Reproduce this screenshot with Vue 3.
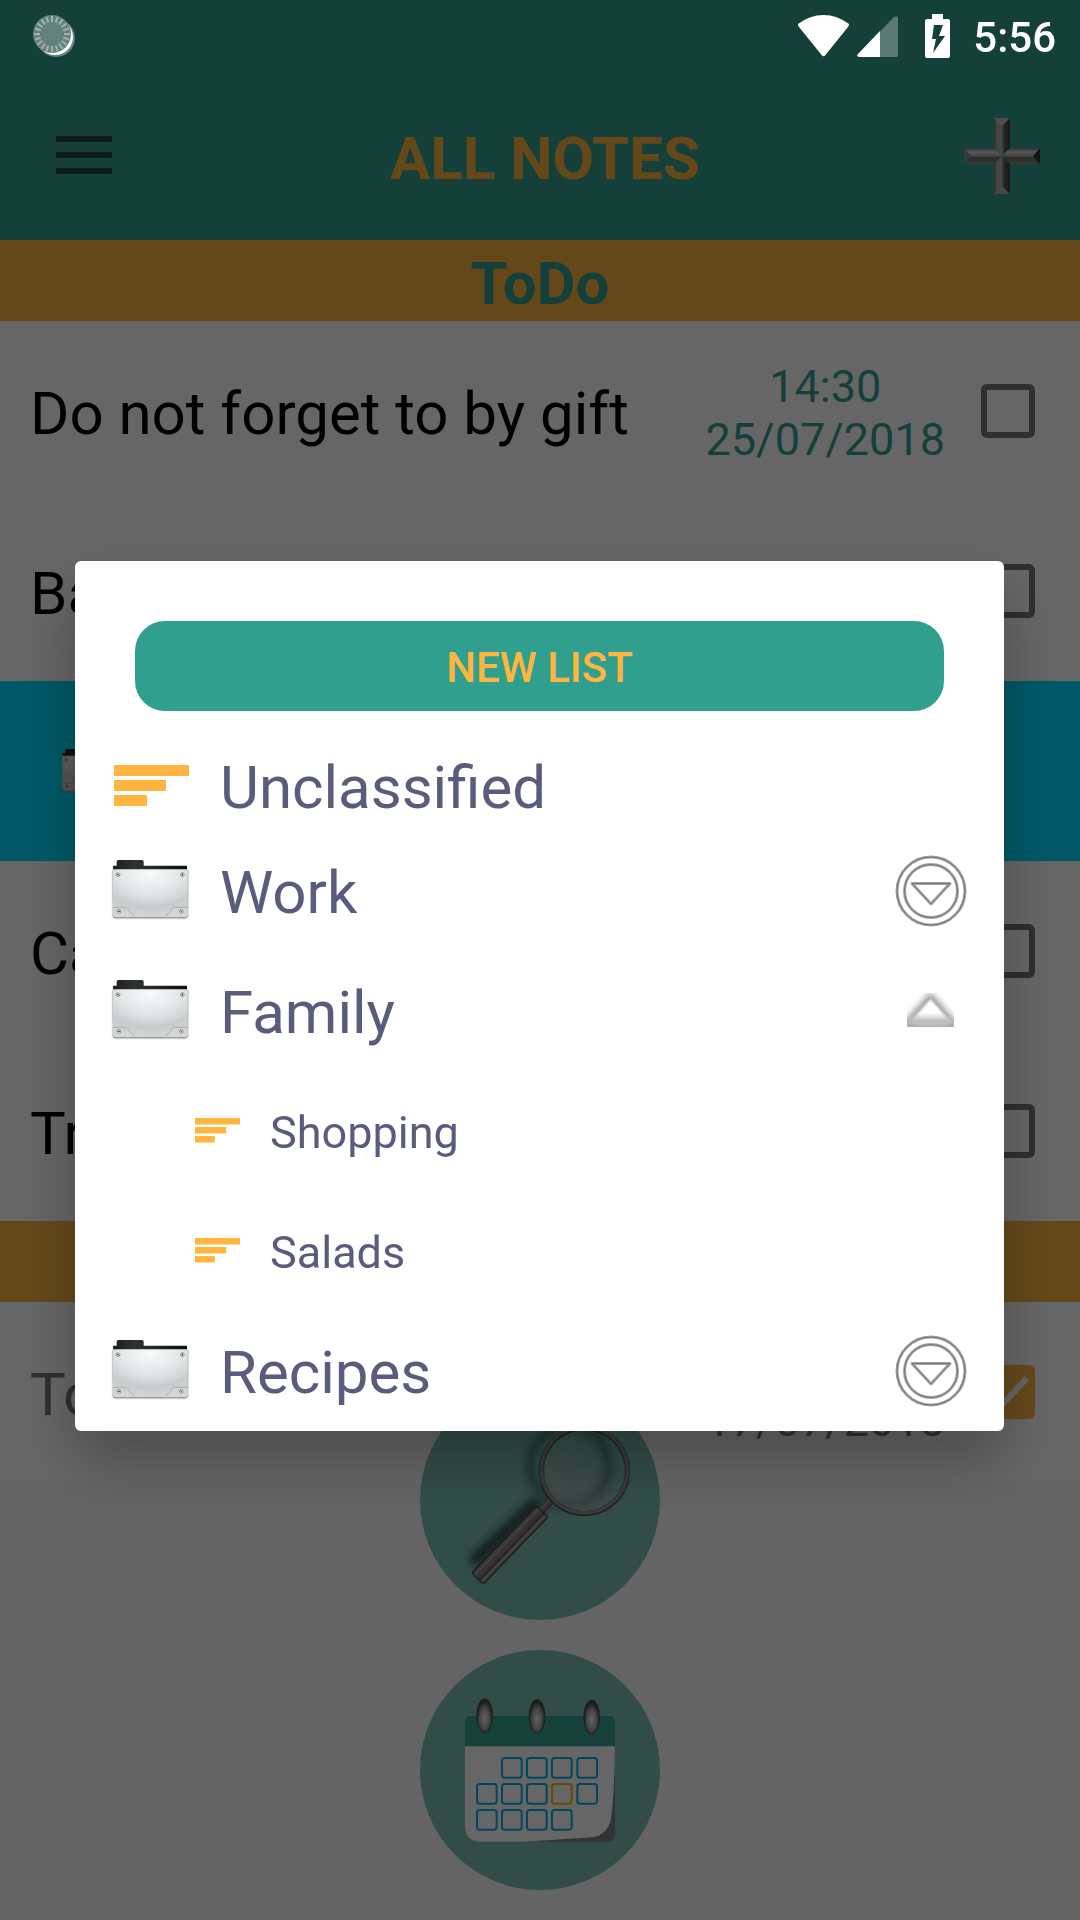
<script setup>
import { ref } from 'vue'

const todo = ref([
  { id: 1, kind: 'note', title: 'Do not forget to by gift', time: '14:30', date: '25/07/2018', done: false },
  { id: 2, kind: 'note', title: 'Ba', done: false },
  { id: 3, kind: 'folder' },
  { id: 4, kind: 'note', title: 'Ca', done: false },
  { id: 5, kind: 'note', title: 'Tr', done: false },
])

const completed = ref([
  { id: 6, title: 'To', time: '', date: '17/07/2018', done: true },
])

const lists = [
  { name: 'Unclassified', type: 'list' },
  { name: 'Work', type: 'folder', open: false },
  { name: 'Family', type: 'folder', open: true },
  { name: 'Shopping', type: 'child' },
  { name: 'Salads', type: 'child' },
  { name: 'Recipes', type: 'folder', open: false },
]

const ticks = Array.from({ length: 20 }, (_, i) => i * 18)
const days = [
  [363, 381], [438, 381], [513, 381], [589, 381],
  [288, 459], [363, 459], [438, 459], [513, 459, true], [589, 459],
  [288, 537], [363, 537], [438, 537], [513, 537],
]
const rings = [[314, 257], [471, 259], [635, 261]]
</script>

<template>
  <div class="app">
    <svg class="defs" width="0" height="0" aria-hidden="true">
      <defs>
        <radialGradient id="face" cx=".5" cy=".1" r=".9">
          <stop offset="0" stop-color="#f8fbfc" />
          <stop offset=".45" stop-color="#e3e6e7" />
          <stop offset=".75" stop-color="#c9cccd" />
          <stop offset="1" stop-color="#d4d6d7" />
        </radialGradient>
        <linearGradient id="tab" x1="0" x2="1">
          <stop offset="0" stop-color="#1b1d1d" />
          <stop offset=".3" stop-color="#303333" />
          <stop offset="1" stop-color="#0d0e0e" />
        </linearGradient>
        <symbol id="folder" viewBox="63 60 234 186">
          <path d="M69 90V80q0-3 4-3h7V65q0-5 5-5h71q5 0 5 5v12h128q2 0 2 3v10z" fill="url(#tab)" />
          <path d="M70 232q2 6 8 6h205q6 0 9-6z" fill="#b9b9b9" opacity=".6" />
          <path d="M66 88h230l-2 139q0 6-6 6H75q-6 0-6-6z" fill="url(#face)" />
          <path d="M67 90v138M294 90v138" stroke="#b0b3b4" stroke-width="2" fill="none" />
          <path d="M69 227q0 6 6 6h213q6 0 6-6" stroke="#707273" stroke-width="2" fill="none" />
          <path d="M70 202h40l24 28M293 202h-43l-24 28" stroke="#9b9d9e" stroke-width="2" fill="none" />
          <g fill="#dcdcdc" stroke="#85878a" stroke-width="2">
            <circle cx="84" cy="104" r="6" /><circle cx="277" cy="104" r="6" />
            <circle cx="87" cy="214" r="6" /><circle cx="274" cy="214" r="6" />
          </g>
          <path d="M80 102l8 4M277 100v8M83 214h8M271 211l6 6" stroke="#444" stroke-width="3" />
        </symbol>
        <symbol id="lines" viewBox="0 0 75 43">
          <path d="M0 0h75v11H0zM0 15h52v11H0zM0 30h33v11H0z" fill="#ffb53f" />
        </symbol>
      </defs>
    </svg>

    <div class="status">
      <svg class="sync" width="43" height="44" viewBox="0 0 43 44" aria-hidden="true">
        <circle cx="23" cy="24" r="19" fill="#fff" opacity=".35" />
        <circle cx="22" cy="23" r="18" fill="#fff" />
        <circle cx="19" cy="20" r="19" fill="#64827c" />
        <path v-for="a in ticks" :key="a" d="M19 2v6" stroke="#9fb2ae" stroke-width="2" :transform="`rotate(${a} 19 20)`" />
      </svg>
      <svg class="wifi" width="51" height="42" viewBox="0 0 51 42" aria-hidden="true">
        <path d="M0 9Q12 0 25.500 0T51 9q0 2-1 3L27 40.500q-1.500 1.500-3 0L1 12q-1-1-1-3z" fill="#fff" />
      </svg>
      <svg class="signal" width="41" height="41" viewBox="0 0 41 41" aria-hidden="true">
        <path d="M1 38L37 1q4-2 4 1v37q0 2-2 2H2q-3-1-1-3z" fill="#fff" opacity=".3" />
        <path d="M1 38L23 15v26H2q-3-1-1-3z" fill="#fff" />
      </svg>
      <svg class="battery" width="25" height="44" viewBox="0 0 25 44" aria-hidden="true">
        <path d="M7 0h11v5h5q2 0 2 2v35q0 2-2 2H2q-2 0-2-2V7q0-2 2-2h5z" fill="#fff" />
        <path d="M9 11h9l-4 11h6L8 39l3-14H7z" fill="#14403a" />
      </svg>
      <span class="clock">5:56</span>
    </div>

    <header class="bar">
      <button class="menu" aria-label="Menu">
        <svg width="56" height="40" viewBox="0 0 56 40"><path d="M0 0h56v6H0zM0 16h56v6H0zM0 32h56v6H0z" fill="#194e44" /></svg>
      </button>
      <h1 class="title">ALL NOTES</h1>
      <button class="add" aria-label="Add">
        <svg width="76" height="76" viewBox="0 0 76 76">
          <defs>
            <linearGradient id="pv" x1="0" x2="1">
              <stop offset="0" stop-color="#777" /><stop offset=".2" stop-color="#aaa" />
              <stop offset=".45" stop-color="#b4b4b4" /><stop offset=".65" stop-color="#5c5c5c" /><stop offset="1" stop-color="#383838" />
            </linearGradient>
            <linearGradient id="ph" x1="0" x2="0" y1="0" y2="1">
              <stop offset="0" stop-color="#777" /><stop offset=".25" stop-color="#d8d8d8" />
              <stop offset=".48" stop-color="#b0b0b0" /><stop offset=".62" stop-color="#666" /><stop offset="1" stop-color="#8c8c8c" />
            </linearGradient>
          </defs>
          <path d="M30 0h16v30l-8 8-8-8zM30 76h16V46l-8-8-8 8z" fill="url(#pv)" />
          <path d="M0 30h30l8 8-8 8H0zM76 30H46l-8 8 8 8h30z" fill="url(#ph)" />
          <path d="M30 0h16l-8 8z" fill="#c4c4c4" /><path d="M30 76h16l-8-8z" fill="#b0b0b0" />
          <path d="M0 30v16l7-8z" fill="#8c8c8c" /><path d="M76 30v16l-7-8z" fill="#303030" />
        </svg>
      </button>
    </header>

    <main>
      <h2 class="band">ToDo</h2>
      <ul class="notes">
        <li v-for="n in todo" :key="n.id" :class="['note', n.kind]">
          <svg v-if="n.kind === 'folder'" width="57" height="45" aria-hidden="true"><use href="#folder" /></svg>
          <template v-else>
            <label class="name" :for="`n${n.id}`">{{ n.title }}</label>
            <div v-if="n.date" class="when"><span>{{ n.time }}</span><span>{{ n.date }}</span></div>
            <input :id="`n${n.id}`" v-model="n.done" class="check" type="checkbox">
          </template>
        </li>
      </ul>
      <h2 class="band" aria-label="Completed"></h2>
      <ul class="notes">
        <li v-for="n in completed" :key="n.id" class="note finished">
          <label class="name" :for="`n${n.id}`">{{ n.title }}</label>
          <div class="when"><span>{{ n.time }}</span><span>{{ n.date }}</span></div>
          <span class="tick">
            <input :id="`n${n.id}`" v-model="n.done" class="check" type="checkbox">
            <svg width="54" height="54" viewBox="0 0 54 54" aria-hidden="true"><path d="M8 27l13 13 25-27" fill="none" stroke="#fff" stroke-width="6" /></svg>
          </span>
        </li>
      </ul>
    </main>

    <nav class="fabs">
      <button class="fab" aria-label="Search">
        <svg width="240" height="240" viewBox="120 -60 720 720">
          <defs>
            <filter id="soft" x="-30%" y="-30%" width="160%" height="160%"><feGaussianBlur stdDeviation="13" /></filter>
            <linearGradient id="grip" x1="0" x2="1">
              <stop offset="0" stop-color="#666" /><stop offset=".2" stop-color="#a0a0a0" /><stop offset=".35" stop-color="#858585" />
              <stop offset=".55" stop-color="#777" /><stop offset=".68" stop-color="#555" /><stop offset=".78" stop-color="#b0b0b0" /><stop offset="1" stop-color="#777" />
            </linearGradient>
            <linearGradient id="glass" x1=".15" y1=".85" x2=".65" y2=".3">
              <stop offset="0" stop-color="#bbb" stop-opacity=".65" /><stop offset="1" stop-color="#bbb" stop-opacity="0" />
            </linearGradient>
          </defs>
          <g filter="url(#soft)" fill="none" stroke="#1c3833">
            <circle cx="568" cy="196" r="118" stroke-width="24" opacity=".55" />
            <path d="M474 304L278 488" stroke-width="40" opacity=".85" />
          </g>
          <circle cx="613" cy="212" r="125" fill="url(#glass)" />
          <path d="M500 270Q545 125 690 126" fill="none" stroke="#7dc0b4" stroke-width="3" opacity=".25" />
          <circle cx="613" cy="212" r="129" fill="none" stroke="#444" stroke-width="15" />
          <circle cx="613" cy="210" r="129" fill="none" stroke="#929292" stroke-width="10" />
          <g transform="translate(293 535) rotate(44)">
            <rect x="-16" y="-318" width="34" height="62" fill="url(#grip)" />
            <rect x="-24" y="-279" width="48" height="280" rx="7" fill="url(#grip)" stroke="#444" stroke-width="4" />
          </g>
        </svg>
      </button>
      <button class="fab" aria-label="Calendar">
        <svg width="240" height="240" viewBox="120 60 720 720">
          <defs>
            <radialGradient id="ring" cy=".58">
              <stop offset="0" stop-color="#f4f4f4" /><stop offset=".6" stop-color="#aaa" /><stop offset="1" stop-color="#444" />
            </radialGradient>
          </defs>
          <path d="M470 635l235-200v175q0 25-25 25z" fill="#808080" />
          <path d="M255 340h449Q704 480 694 560q-8 54-58 62-80 6-210 13H300q-45-2-45-48z" fill="#fff" />
          <path d="M255 349v-76q0-15 15-15h420q15 0 15 15v76z" fill="#37a391" />
          <rect v-for="d in days" :key="d.join()" :x="d[0] + 3" :y="d[1] + 3" width="59" height="59" rx="8" fill="none" :stroke="d[2] ? '#ffb900' : '#00aee6'" stroke-width="6" />
          <ellipse v-for="r in rings" :key="r[0]" :cx="r[0]" :cy="r[1]" rx="24" ry="51" fill="url(#ring)" stroke="#444" stroke-width="2" />
        </svg>
      </button>
    </nav>

    <div class="scrim">
      <section class="dialog" role="dialog" aria-label="Lists">
        <button class="create">NEW LIST</button>
        <ul class="lists">
          <li v-for="l in lists" :key="l.name" :class="['item', l.type]">
            <svg v-if="l.type === 'folder'" class="icon" width="78" height="62" aria-hidden="true"><use href="#folder" /></svg>
            <svg v-else-if="l.type === 'list'" class="icon" width="75" height="43" aria-hidden="true"><use href="#lines" /></svg>
            <svg v-else class="icon" width="45" height="27" viewBox="0 0 75 45" aria-hidden="true"><use href="#lines" width="75" height="43" /></svg>
            <span class="label">{{ l.name }}</span>
            <button v-if="l.type === 'folder'" class="toggle" :aria-label="`Toggle ${l.name}`" :aria-expanded="l.open">
              <svg v-if="l.open" width="72" height="72" viewBox="0 0 72 72">
                <defs>
                  <clipPath id="cut"><path d="M12 18h47v34H12z" /></clipPath>
                  <filter id="haze" x="-20%" y="-20%" width="140%" height="140%"><feGaussianBlur stdDeviation="3" /></filter>
                  <filter id="edge"><feGaussianBlur stdDeviation="1" /></filter>
                  <linearGradient id="base" x1="0" x2="0" y1="0" y2="1"><stop offset="0" stop-color="#c0c0c0" stop-opacity="0" /><stop offset=".6" stop-color="#bdbdbd" /><stop offset="1" stop-color="#c8c8c8" /></linearGradient>
                </defs>
                <g clip-path="url(#cut)">
                  <path d="M12 50L35.500 23 59 50z" fill="#999" stroke="#999" stroke-width="8" filter="url(#haze)" />
                  <path d="M35.500 24L55 46H16z" fill="#fff" filter="url(#edge)" />
                  <path d="M17 38h37l5 11q-23 4-47 0z" fill="url(#base)" filter="url(#edge)" />
                </g>
              </svg>
              <svg v-else width="72" height="72" viewBox="0 0 72 72" fill="none" stroke-linejoin="round">
                <g stroke="#a2a2a2" stroke-width="3"><circle cx="36" cy="36" r="34" /><circle cx="36" cy="36" r="26.500" /><path d="M17 28.500h38L36 49z" /></g>
                <g stroke="#777" stroke-width="1"><circle cx="36" cy="36" r="34" /><circle cx="36" cy="36" r="26.500" /><path d="M17 28.500h38L36 49z" /></g>
              </svg>
            </button>
          </li>
        </ul>
      </section>
    </div>
  </div>
</template>

<style>
body {
  margin: 0;
}
</style>

<style scoped>
.app {
  position: relative;
  min-height: 100vh;
  background: #fafafa;
  font-family: Roboto, "Liberation Sans", sans-serif;
  font-size: 60px;
  line-height: 70px;
  color: #000;
}
.app * {
  box-sizing: border-box;
}
.defs {
  position: absolute;
}
svg {
  display: block;
  flex: none;
}
button {
  border: 0;
  padding: 0;
  background: none;
  font: inherit;
}
h1, h2, ul {
  margin: 0;
  padding: 0;
  font: inherit;
  list-style: none;
}
.status {
  position: absolute;
  z-index: 3;
  top: 0;
  left: 0;
  right: 0;
  height: 72px;
  padding: 0 24px 0 33px;
  display: flex;
  align-items: center;
}
.sync {
  margin-right: auto;
}
.wifi {
  margin-right: 8px;
}
.signal {
  margin-right: 27px;
}
.battery {
  margin-right: 23px;
}
.clock {
  padding-top: 4px;
  color: #fff;
  font-size: 42px;
  font-weight: 500;
  line-height: 50px;
}
.bar {
  display: flex;
  align-items: center;
  height: 240px;
  padding: 72px 40px 0 56px;
  background: #32a08f;
}
.menu {
  width: 70px;
}
.title {
  flex: 1;
  padding-top: 5px;
  text-align: center;
  font-weight: 700;
  color: #fbb540;
}
.band {
  height: 81px;
  padding-top: 9px;
  background: #fbb540;
  color: #32a08f;
  font-weight: 700;
  text-align: center;
}
.notes {
  background: #fff;
}
.note {
  display: flex;
  align-items: center;
  height: 180px;
  padding: 0 45px 0 30px;
}
.note.folder {
  padding-left: 61px;
  background: #00ddff;
}
.name {
  flex: 1;
  padding-top: 6px;
}
.when {
  display: flex;
  flex-direction: column;
  margin-right: 36px;
  padding-top: 4px;
  font-size: 45px;
  line-height: 53px;
  text-align: center;
  color: #32a08f;
}
.when span {
  min-height: 53px;
}
.finished .name, .finished .when {
  color: #757575;
}
.check {
  display: block;
  appearance: none;
  width: 54px;
  height: 54px;
  margin: 0;
  border: 6px solid #757575;
  border-radius: 6px;
}
.check:checked {
  border-color: #fbb540;
  background: #fbb540;
}
.tick {
  position: relative;
}
.tick svg {
  position: absolute;
  inset: 0;
  pointer-events: none;
}
.fabs {
  position: absolute;
  left: 0;
  right: 0;
  bottom: 30px;
  display: flex;
  flex-direction: column;
  align-items: center;
  gap: 30px;
}
.fab {
  border-radius: 50%;
  background: #7dc0b4;
}
.scrim {
  position: absolute;
  z-index: 2;
  inset: 0;
  display: flex;
  align-items: center;
  padding: 72px 76px 0 75px;
  background: rgba(0, 0, 0, 0.6);
}
.dialog {
  flex: 1;
  padding-top: 60px;
  border-radius: 6px;
  background: #fff;
  box-shadow: 0 30px 60px rgba(0, 0, 0, 0.27);
}
.create {
  display: block;
  width: calc(100% - 120px);
  height: 90px;
  margin: 0 60px 30px;
  padding-top: 4px;
  border-radius: 30px;
  background: #319f8e;
  color: #ffb53f;
  font-size: 42px;
  font-weight: 500;
  line-height: 50px;
}
.item {
  display: flex;
  align-items: center;
  height: 120px;
  padding: 0 37px 0 36px;
  color: #5a5c7e;
}
.item.list {
  height: 90px;
  padding-left: 39px;
}
.item.child {
  padding-left: 120px;
  font-size: 45px;
  line-height: 53px;
}
.icon {
  margin-right: 31px;
}
.label {
  flex: 1;
  padding-top: 4px;
}
.child .icon {
  margin-right: 30px;
}
.child .label {
  padding-top: 2px;
}
</style>
